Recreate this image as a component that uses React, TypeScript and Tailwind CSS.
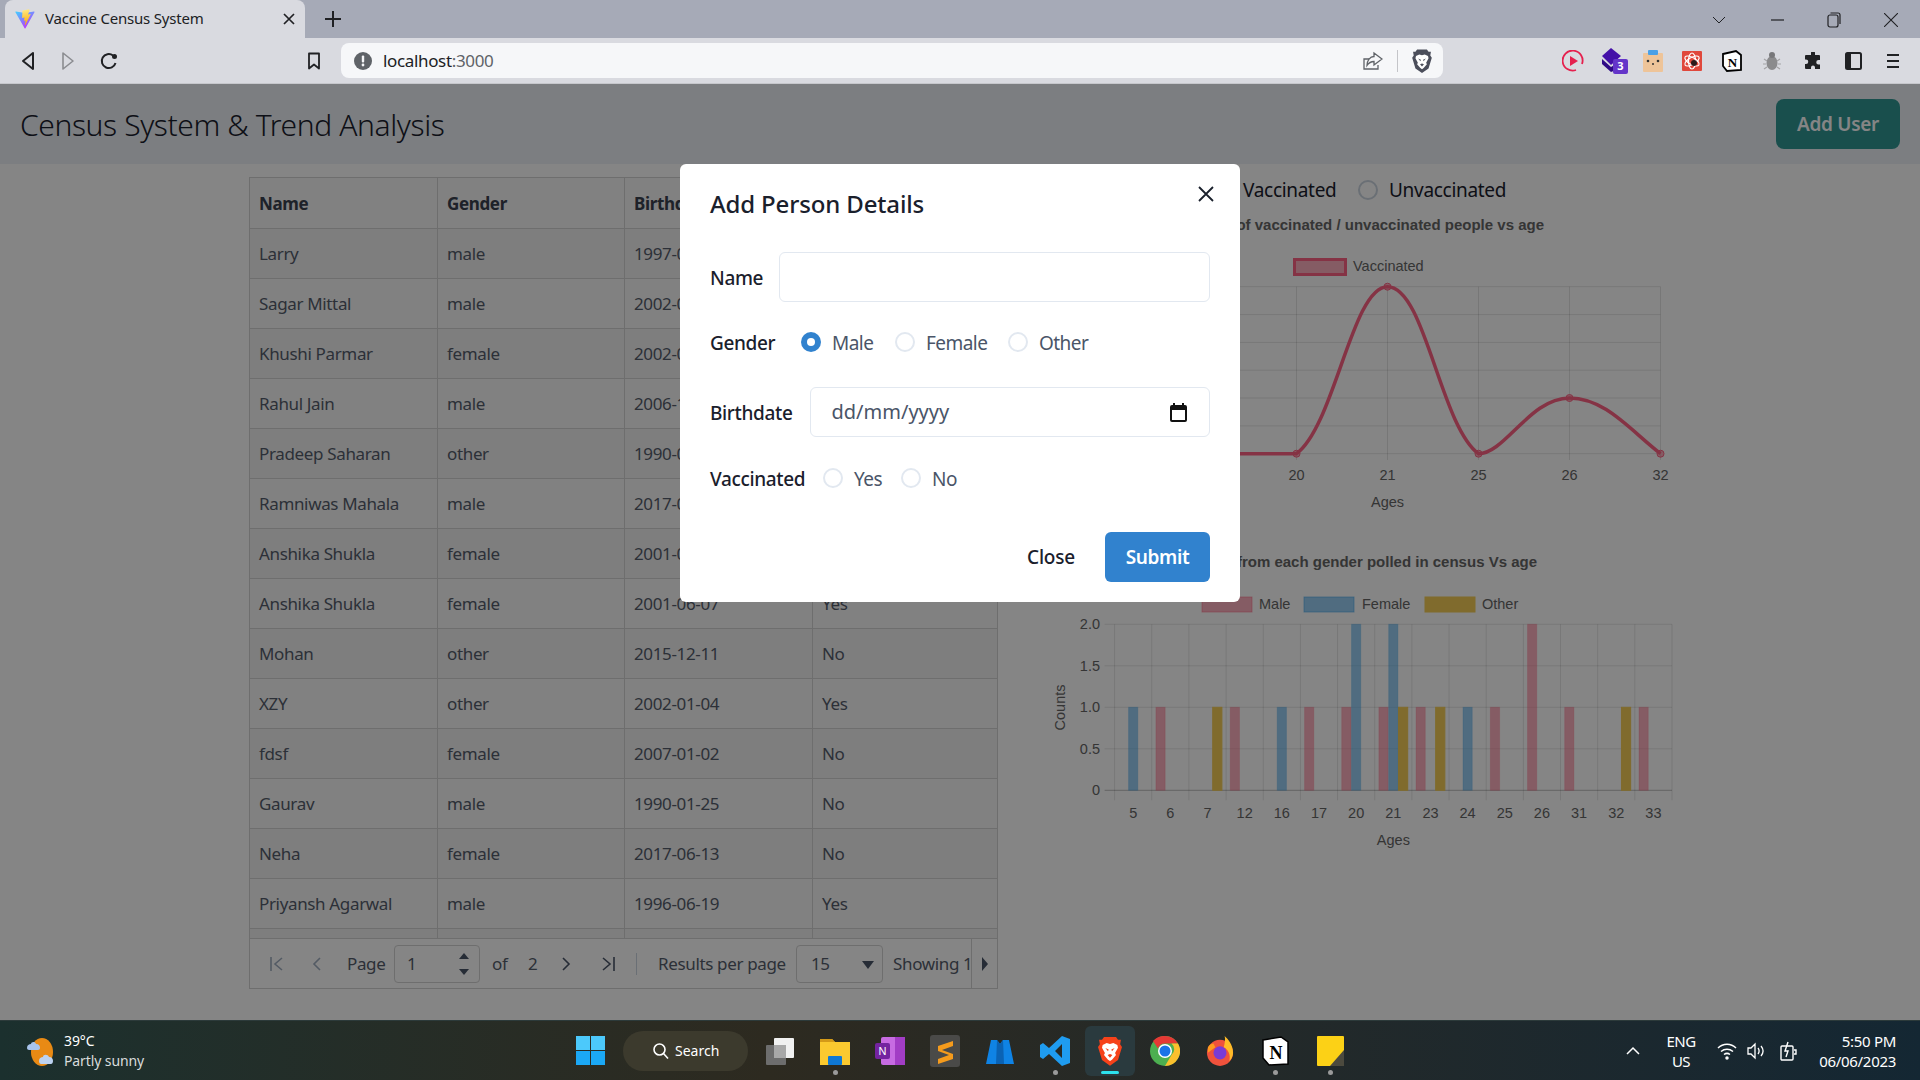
import React from "react";

const rows = [
  ["Larry", "male", "1997-04-12", "Yes"],
  ["Sagar Mittal", "male", "2002-03-18", "Yes"],
  ["Khushi Parmar", "female", "2002-08-21", "Yes"],
  ["Rahul Jain", "male", "2006-11-02", "No"],
  ["Pradeep Saharan", "other", "1990-05-30", "No"],
  ["Ramniwas Mahala", "male", "2017-02-14", "No"],
  ["Anshika Shukla", "female", "2001-06-07", "Yes"],
  ["Anshika Shukla", "female", "2001-06-07", "Yes"],
  ["Mohan", "other", "2015-12-11", "No"],
  ["XZY", "other", "2002-01-04", "Yes"],
  ["fdsf", "female", "2007-01-02", "No"],
  ["Gaurav", "male", "1990-01-25", "No"],
  ["Neha", "female", "2017-06-13", "No"],
  ["Priyansh Agarwal", "male", "1996-06-19", "Yes"],
];

const ages = ["5", "6", "7", "12", "16", "17", "20", "21", "23", "24", "25", "26", "31", "32", "33"];
const bars: Record<string, [number, number, number]> = {
  "5": [0, 1, 0], "6": [1, 0, 0], "7": [0, 0, 1], "12": [1, 0, 0], "16": [0, 1, 0], "17": [1, 0, 0],
  "20": [1, 2, 0], "21": [1, 2, 1], "23": [1, 0, 1], "24": [0, 1, 0], "25": [1, 0, 0], "26": [2, 0, 0],
  "31": [1, 0, 0], "32": [0, 0, 1], "33": [1, 0, 0],
};

function Radio({ checked = false, dim = false }: { checked?: boolean; dim?: boolean }) {
  return checked ? (
    <span className="flex h-5 w-5 shrink-0 items-center justify-center rounded-full bg-[#3182ce]">
      <span className="h-2 w-2 rounded-full bg-white" />
    </span>
  ) : (
    <span className={`h-5 w-5 shrink-0 rounded-full border-2 ${dim ? "border-[#cbd5e0]" : "border-[#e2e8f0]"}`} />
  );
}

function RadioLabel({ label, checked, w }: { label: string; checked?: boolean; w: string }) {
  return (
    <span className={`flex items-center gap-[11px] ${w}`}>
      <Radio checked={checked} />
      <span className="pt-[1px] text-[19px] leading-5 tracking-[-0.55px] text-[#4a5568]">{label}</span>
    </span>
  );
}

function Chart1() {
  const xs = [1114.5, 1205.5, 1296.5, 1387.5, 1478.5, 1569.5, 1660.5];
  const ys = [286.7, 314.6, 342.4, 370.2, 398, 425.9, 453.7];
  return (
    <svg width="680" height="310" viewBox="1040 210 680 310" className="block" fontFamily="'Liberation Sans', Arial, sans-serif">
      <text x="1544" y="230" textAnchor="end" fontSize="15" fontWeight="700" fill="#666666">Number of vaccinated / unvaccinated people vs age</text>
      <rect x="1294.5" y="259.5" width="51" height="15" fill="#ff638280" stroke="#ff6384" strokeWidth="3" />
      <text x="1353" y="270.500" fontSize="14.500" fill="#666666">Vaccinated</text>
      {xs.map((x) => <line key={x} x1={x} x2={x} y1="286.7" y2="460" stroke="#0000001a" />)}
      {ys.map((y) => <line key={y} x1="1100" x2="1660.5" y1={y} y2={y} stroke="#0000001a" />)}
      <path d="M1100 453.7 L1296.5 453.7 C1335 425 1352 286.7 1387.500 286.7 C1425 286.7 1440 425 1478.5 453.7 C1505 453.7 1530 398 1569.5 398 C1605 398 1630 430 1660.5 453.7" fill="none" stroke="#ff6384" strokeWidth="3.500" />
      {[[1296.5, 453.7], [1387.5, 286.7], [1478.5, 453.7], [1569.5, 398], [1660.5, 453.7]].map(([x, y]) => (
        <circle key={x} cx={x} cy={y} r="3.500" fill="#ff638280" stroke="#ff6384" />
      ))}
      {[["20", 1296.5], ["21", 1387.5], ["25", 1478.5], ["26", 1569.5], ["32", 1660.5]].map(([t, x]) => (
        <text key={t} x={x} y="480" textAnchor="middle" fontSize="14.500" fill="#666666">{t}</text>
      ))}
      <text x="1387.5" y="507" textAnchor="middle" fontSize="14.500" fill="#666666">Ages</text>
    </svg>
  );
}

function Chart2() {
  const left = 1114.6, right = 1672, top = 624.3, bottom = 790.3;
  const step = (right - left) / 15;
  const colors = ["#ff638280", "#36a2eb80", "#f5ce56"];
  const solid = ["#ff638240", "#36a2eb40", "#f5ce56"];
  return (
    <svg width="680" height="310" viewBox="1040 540 680 310" className="block" fontFamily="'Liberation Sans', Arial, sans-serif">
      <text x="1537" y="567" textAnchor="end" fontSize="15" fontWeight="700" fill="#666666">Number of people from each gender polled in census Vs age</text>
      {[["Male", 1202, 1259, "#ff638280", "#ff638280"], ["Female", 1304, 1362, "#36a2eb80", "#36a2eb80"], ["Other", 1425, 1482, "#f5ce56", "#f5ce56"]].map(([t, bx, tx, c, s]) => (
        <g key={t as string}>
          <rect x={bx as number} y="597" width="50" height="15" fill={c as string} stroke={s as string} />
          <text x={tx as number} y="609" fontSize="14.500" fill="#666666">{t}</text>
        </g>
      ))}
      {Array.from({ length: 16 }).map((_, i) => (
        <line key={i} x1={left + i * step} x2={left + i * step} y1={top} y2={bottom + 10} stroke="#0000001a" />
      ))}
      {[0, 1, 2, 3, 4].map((i) => (
        <g key={i}>
          <line x1={left - 10} x2={right} y1={top + (i * (bottom - top)) / 4} y2={top + (i * (bottom - top)) / 4} stroke={i === 4 ? "#00000040" : "#0000001a"} />
          <text x="1100" y={top + (i * (bottom - top)) / 4 + 5} textAnchor="end" fontSize="14.500" fill="#666666">{["2.0", "1.5", "1.0", "0.5", "0"][i]}</text>
        </g>
      ))}
      {ages.map((a, i) => {
        const cx = left + step * (i + 0.5);
        return (
          <g key={a}>
            {bars[a].map((v, k) =>
              v > 0 ? (
                <rect key={k} x={cx + (k - 1) * 9.8 - 4.6} y={bottom - (v * (bottom - top)) / 2} width="9.2" height={(v * (bottom - top)) / 2} fill={colors[k]} stroke={solid[k]} strokeWidth="1" />
              ) : null
            )}
            <text x={cx} y="818" textAnchor="middle" fontSize="14.500" fill="#666666">{a}</text>
          </g>
        );
      })}
      <text x="1393.4" y="845" textAnchor="middle" fontSize="14.500" fill="#666666">Ages</text>
      <text transform="translate(1065 707.5) rotate(-90)" textAnchor="middle" fontSize="14.500" fill="#666666">Counts</text>
    </svg>
  );
}

function ViteIcon() {
  return (
    <svg width="20" height="20" viewBox="0 0 410 404">
      <defs>
        <linearGradient id="va" x1="0" y1="0" x2="0.6" y2="1">
          <stop offset="0" stopColor="#41d1ff" />
          <stop offset="1" stopColor="#bd34fe" />
        </linearGradient>
        <linearGradient id="vb" x1="0.4" y1="0" x2="0.5" y2="1">
          <stop offset="0" stopColor="#ffea83" />
          <stop offset="1" stopColor="#ffa800" />
        </linearGradient>
      </defs>
      <path d="M399 63 215 392c-4 7-14 7-18 0L9 63c-4-7 2-16 11-15l184 33c1 0 2 0 3 0l180-33c9-1 16 8 12 15z" fill="url(#va)" />
      <path d="M293 2 157 29c-2 0-4 2-4 5l-8 142c0 3 3 6 6 5l38-9c4-1 7 2 6 6l-11 55c-1 4 3 7 6 6l23-7c4-1 7 2 6 6l-18 86c-1 5 6 8 9 3l2-3 108-215c2-4-1-8-5-7l-38 7c-4 1-7-3-6-6l25-86c1-4-3-8-6-7z" fill="url(#vb)" />
    </svg>
  );
}

function BraveLion({ fill, w = 18, h = 22 }: { fill: string; w?: number; h?: number }) {
  return (
    <svg width={w} height={h} viewBox="0 0 18 22">
      <path d="M4.500 0.500h9L15 2.500 17.200 2.600 16.600 6 18 8 15 17.800 9 22 3 17.800 0 8 1.400 6 .8 2.600 3 2.500z" fill={fill} />
      <path d="M3.500 6.500 6.500 5 9 5.800 11.500 5 14.500 6.500 15 8.500 12.800 12.500 13.500 14 10.500 17.500 9 18.500 7.500 17.500 4.500 14 5.200 12.500 3 8.500z" fill="#ffffff" />
      <path d="M5.500 8.800 8 9.800 7.500 11.200zM12.500 8.800 10 9.800 10.500 11.200zM7.200 14 9 13.200 10.800 14 9 16z" fill={fill} />
    </svg>
  );
}

function TaskIcon({ children, ml, dot }: { children: React.ReactNode; ml: string; dot?: boolean }) {
  return (
    <div className={`relative flex h-[50px] w-[35px] shrink-0 items-center justify-center ${ml}`}>
      {children}
      {dot && <span className="absolute bottom-[1px] left-[15px] h-[5px] w-[5px] rounded-full bg-[#9a9a9a]" />}
    </div>
  );
}

function Taskbar() {
  return (
    <div className="flex h-[60px] shrink-0 items-center border-t border-[#2c3a3a] bg-gradient-to-r from-[#1b302e] via-[#2d2a20] via-40% to-[#142733] text-white">
      <div className="flex w-[540px] shrink-0 items-center pl-[24px]">
        <svg width="34" height="32" viewBox="0 0 34 32">
          <ellipse cx="18" cy="17" rx="11" ry="14" fill="#e98a14" />
          <path d="M3 13c0-3 2-4 4-4 0-2 4-3 5 0 3 0 4 2 4 4 0 1-1 2-2 2H5c-1 0-2-1-2-2z" fill="#a9c4ec" />
          <path d="M15 26c0-3 2-4 4-4 0-3 5-3 6 0 3 0 4 2 4 4s-1 3-2 3H17c-1 0-2-1-2-3z" fill="#bcd2f0" />
        </svg>
        <div className="ml-[6px] text-[14px] leading-5 tracking-[-0.1px]">
          <div>39°C</div>
          <div className="text-[#d8dcdc]">Partly sunny</div>
        </div>
      </div>
      <div className="flex items-center pl-[36px]">
        <span className="grid h-[29px] w-[29px] shrink-0 grid-cols-2 gap-[1px]">
          <span className="bg-[#4cc9fb]" /><span className="bg-[#4cc9fb]" /><span className="bg-[#1ba8f5]" /><span className="bg-[#1ba8f5]" />
        </span>
        <div className="ml-[18px] flex h-10 w-[125px] shrink-0 items-center rounded-full bg-[#3c3a2d] pl-[29px] text-[14px]">
          <svg width="18" height="18" viewBox="0 0 18 18" fill="none" stroke="#ffffff" strokeWidth="1.600"><circle cx="7.500" cy="7.500" r="5.500" /><path d="M11.500 11.500 16 16.500" /></svg>
          <span className="ml-[5px]">Search</span>
        </div>
        <TaskIcon ml="ml-[14.5px]">
          <svg width="32" height="32" viewBox="0 0 32 32"><rect x="10" y="3" width="20" height="20" rx="1" fill="#f1f1f1" /><rect x="2" y="10" width="20" height="20" rx="1" fill="#6d6d6d" /><rect x="10" y="10" width="12" height="13" fill="#a8a8a8" /></svg>
        </TaskIcon>
        <TaskIcon ml="ml-[20px]" dot>
          <svg width="30" height="28" viewBox="0 0 30 28"><path d="M0 2h12l3 3h15v23H0z" fill="#fbc92f" /><path d="M0 2h12l3 3H0z" fill="#d49a18" /><rect x="8" y="19" width="14" height="9" rx="1" fill="#0f78d4" /></svg>
        </TaskIcon>
        <TaskIcon ml="ml-[20px]">
          <svg width="30" height="30" viewBox="0 0 30 30"><rect x="6" y="1" width="24" height="28" rx="2" fill="#c76be2" /><rect x="20" y="1" width="10" height="28" fill="#a23dc5" /><rect x="0" y="7" width="15" height="16" rx="2" fill="#7423a0" /><text x="7.500" y="19" textAnchor="middle" fontSize="11" fill="#ffffff" fontFamily="'Liberation Sans', sans-serif">N</text></svg>
        </TaskIcon>
        <TaskIcon ml="ml-[20px]">
          <svg width="30" height="32" viewBox="0 0 30 32"><rect width="30" height="32" rx="3" fill="#4a4a48" /><path d="M8 11 23 6v5L12 15l11 4v5L8 29v-5l11-4L8 16z" fill="#f59b1c" /></svg>
        </TaskIcon>
        <TaskIcon ml="ml-[20px]">
          <svg width="28" height="26" viewBox="0 0 28 26"><path d="M5 2h6l3 4 3-4h6l5 24H0z" fill="#0f83e5" /><path d="M11 2l3 4 3-4 1 24H10z" fill="#0a62b4" /></svg>
        </TaskIcon>
        <TaskIcon ml="ml-[20px]" dot>
          <svg width="30" height="30" viewBox="0 0 30 30"><path d="M22 0 30 3v24l-8 3L9 18l-6 5-3-2V9l3-2 6 5zm0 8-7 7 7 7z" fill="#1f9cf0" /></svg>
        </TaskIcon>
        <div className="relative ml-[12.5px] flex h-[50px] w-[50px] shrink-0 items-center justify-center rounded-md bg-[#2a3a3e]">
          <BraveLion fill="#f6421a" w={24} h={30} />
          <span className="absolute bottom-[2px] left-[16px] h-[3px] w-[18px] rounded-sm bg-[#2de2ee]" />
        </div>
        <TaskIcon ml="ml-[12.5px]">
          <svg width="30" height="30" viewBox="0 0 30 30"><circle cx="15" cy="15" r="15" fill="#4caf50" /><path d="M15 0a15 15 0 0 1 13 7.500H15a7.500 7.500 0 0 0-7 5L3 5a15 15 0 0 1 12-5z" fill="#e53935" /><path d="M28 7.500A15 15 0 0 1 15 30l6.500-11a7.500 7.500 0 0 0 0-11.500z" fill="#fbc02d" /><circle cx="15" cy="15" r="7" fill="#ffffff" /><circle cx="15" cy="15" r="5.500" fill="#1a73e8" /></svg>
        </TaskIcon>
        <TaskIcon ml="ml-[20px]">
          <svg width="28" height="32" viewBox="0 0 30 32"><circle cx="15" cy="18" r="14" fill="#f0523c" /><path d="M20 0c3 3 9 9 9 18a13 13 0 0 1-4 9c2-8-2-13-6-15 1-4 2-8 1-12z" fill="#ffbb28" /><circle cx="15" cy="18" r="7" fill="#7a3bd6" /><path d="M2 12c2-3 4-4 6-4l2 4-8 6z" fill="#ff9a1f" /></svg>
        </TaskIcon>
        <TaskIcon ml="ml-[20px]" dot>
          <svg width="27" height="30" viewBox="0 0 27 30"><path d="M1 4 19 1l7 5v22L7 29 1 22z" fill="#ffffff" stroke="#000000" strokeWidth="1.500" /><text x="14" y="23" textAnchor="middle" fontSize="18" fontWeight="700" fill="#000000" fontFamily="'Liberation Serif', serif">N</text></svg>
        </TaskIcon>
        <TaskIcon ml="ml-[20px]" dot>
          <svg width="27" height="30" viewBox="0 0 27 30"><rect width="27" height="30" rx="1" fill="#fcd116" /><path d="M27 14v16H13z" fill="#4c4a3e" /></svg>
        </TaskIcon>
      </div>
      <div className="ml-auto flex items-center pr-[24px] text-[15px] leading-5">
        <svg width="14" height="10" viewBox="0 0 14 10" fill="none" stroke="#ffffff" strokeWidth="1.500"><path d="M1 8 7 2l6 6" /></svg>
        <div className="ml-[25px] w-[32px] text-center tracking-[-0.5px]">ENG<br />US</div>
        <svg className="ml-[20px]" width="20" height="18" viewBox="0 0 20 18" fill="none" stroke="#ffffff" strokeWidth="1.500"><path d="M1 6c5-5 13-5 18 0M4 9.500c3.500-3 8.500-3 12 0M7 12.500c2-1.500 4-1.500 6 0" /><circle cx="10" cy="16" r="1" fill="#ffffff" /></svg>
        <svg className="ml-[9px]" width="20" height="18" viewBox="0 0 20 18" fill="none" stroke="#ffffff" strokeWidth="1.300"><path d="M2 6h3l4-4v14l-4-4H2zM12 6c1.500 2 1.500 4 0 6M15 4c2.500 3 2.500 7 0 10" /></svg>
        <svg className="ml-[12px]" width="20" height="20" viewBox="0 0 20 20" fill="none" stroke="#ffffff" strokeWidth="1.400"><rect x="3" y="5" width="12" height="14" rx="1" /><path d="M16 9h2v4h-2" /><path d="M10 1 7 10h3l-2 6" stroke="#ffffff" /></svg>
        <div className="ml-[20px] w-[78px] whitespace-nowrap text-right tracking-[-0.3px]">5:50 PM<br />06/06/2023</div>
      </div>
    </div>
  );
}

function Toolbar() {
  return (
    <div className="flex h-[46px] shrink-0 items-center border-b border-[#c6c7cc] bg-[#d9dae0]">
      <svg className="ml-[20px]" width="16" height="20" viewBox="0 0 16 20" fill="none" stroke="#202124" strokeWidth="2" strokeLinejoin="round"><path d="M13 2 3 10l10 8z" /></svg>
      <svg className="ml-[24px]" width="16" height="20" viewBox="0 0 16 20" fill="none" stroke="#8b8c90" strokeWidth="1.600" strokeLinejoin="round"><path d="M3 2l10 8-10 8z" /></svg>
      <svg className="ml-[24px]" width="18" height="18" viewBox="0 0 18 18" fill="none" stroke="#202124" strokeWidth="2"><path d="M15.500 11A7 7 0 1 1 13 3.500" /><circle cx="14.500" cy="4.500" r="2.500" fill="#202124" stroke="none" /></svg>
      <svg className="ml-[189px]" width="14" height="18" viewBox="0 0 14 18" fill="none" stroke="#202124" strokeWidth="1.800" strokeLinejoin="round"><path d="M2 1.500h10v15l-5-4-5 4z" /></svg>
      <div className="ml-[20px] flex h-[35px] w-[1102px] items-center rounded-lg bg-[#f6f7f9] pl-[13px]">
        <svg width="18" height="18" viewBox="0 0 18 18"><circle cx="9" cy="9" r="9" fill="#5f6368" /><rect x="7.800" y="3.500" width="2.400" height="7" rx="1" fill="#f6f7f9" /><circle cx="9" cy="13" r="1.400" fill="#f6f7f9" /></svg>
        <span className="ml-[11px] text-[17px] tracking-[-0.35px]"><span className="text-[#202124]">localhost</span><span className="text-[#5f6368]">:3000</span></span>
        <svg className="ml-auto" width="20" height="20" viewBox="0 0 20 20" fill="none" stroke="#5f6368" strokeWidth="1.300"><path d="M6 18h-5V8h5M3 18h12v-4" /><path d="M11 2l8 6-8 6v-3.500c-3 0-5 1-7 4 0-5 3-9 7-9z" /></svg>
        <span className="ml-[14px] h-[22px] w-px bg-[#c4c5c9]" />
        <span className="ml-[14px] mr-[11px] flex"><BraveLion fill="#4b4e5b" w={20} h={24} /></span>
      </div>
      <div className="ml-[110px] flex items-center">
        <span className="flex w-[40px] justify-center">
          <svg width="22" height="22" viewBox="0 0 22 22" fill="none"><path d="M14 20A10 10 0 1 1 20 14" stroke="#e5204e" strokeWidth="1.800" /><path d="M8 6l8 5-8 5z" fill="#e5204e" /></svg>
        </span>
        <span className="relative flex w-[40px] justify-center">
          <svg width="24" height="26" viewBox="0 0 24 26"><path d="M10 0l10 8-10 9L1 8z" fill="#4410a8" /><path d="M1 11l9 8 5-3v6L10 24 1 16z" fill="#2f0a85" /></svg>
          <span className="absolute left-[20px] top-[11px] flex h-[15px] w-[15px] items-center justify-center rounded-[2px] bg-[#6435c9] text-[11px] font-bold text-white">3</span>
        </span>
        <span className="flex w-[39px] justify-center">
          <svg width="20" height="22" viewBox="0 0 20 22"><rect y="3" width="20" height="19" rx="1" fill="#eec499" /><rect x="5" width="10" height="5" rx="1" fill="#4aa0e6" /><circle cx="5" cy="11" r="1.300" fill="#333333" /><circle cx="15" cy="11" r="1.300" fill="#333333" /><circle cx="10" cy="14" r="1" fill="#333333" /></svg>
        </span>
        <span className="flex w-[40px] justify-center">
          <svg width="20" height="20" viewBox="0 0 20 20"><rect width="20" height="20" rx="1" fill="#e0483c" /><g fill="none" stroke="#ffffff" strokeWidth="1.200"><ellipse cx="10" cy="10" rx="8" ry="3.500" transform="rotate(30 10 10)" /><ellipse cx="10" cy="10" rx="8" ry="3.500" transform="rotate(-30 10 10)" /><ellipse cx="10" cy="10" rx="8" ry="3.500" transform="rotate(90 10 10)" /></g><circle cx="12" cy="12" r="3" fill="#2a1a1a" /></svg>
        </span>
        <span className="flex w-[40px] justify-center">
          <svg width="20" height="22" viewBox="0 0 20 22"><path d="M1 4 14 1l5 4v15L5 21 1 16z" fill="#ffffff" stroke="#000000" strokeWidth="1.800" /><text x="10.500" y="17" textAnchor="middle" fontSize="13" fontWeight="700" fill="#000000" fontFamily="'Liberation Serif', serif">N</text></svg>
        </span>
        <span className="flex w-[40px] justify-center">
          <svg width="18" height="20" viewBox="0 0 18 20"><ellipse cx="9" cy="12" rx="5.500" ry="7" fill="#8b8b8d" /><circle cx="9" cy="4" r="3" fill="#77777a" /><path d="M1 8l3 2M17 8l-3 2M0 13h3M18 13h-3M1 18l3-2M17 18l-3-2" stroke="#a3a3a5" strokeWidth="1.200" /></svg>
        </span>
        <span className="flex w-[41px] justify-center">
          <svg width="18" height="18" viewBox="0 0 18 18"><path d="M7 1a2 2 0 0 1 4 0v2h4a1 1 0 0 1 1 1v4h-1.500a2 2 0 0 0 0 4.500H16V17H11v-1.500a2 2 0 0 0-4 0V17H2a1 1 0 0 1-1-1v-4h1a2 2 0 0 0 0-4.500H1V4a1 1 0 0 1 1-1h5z" fill="#202124" /></svg>
        </span>
        <span className="flex w-[40px] justify-center">
          <svg width="17" height="18" viewBox="0 0 17 18" fill="none"><rect x="1" y="1" width="15" height="16" rx="1.500" stroke="#202124" strokeWidth="2" /><rect x="1" y="1" width="5" height="16" fill="#202124" /></svg>
        </span>
        <span className="flex w-[40px] justify-center">
          <svg width="12" height="16" viewBox="0 0 12 16" stroke="#202124" strokeWidth="2"><path d="M0 2h12M0 8h12M0 14h12" /></svg>
        </span>
      </div>
    </div>
  );
}

function Pagination() {
  return (
    <div className="flex h-[50px] items-center border-x border-b border-[#d4d4d4] text-[17px] tracking-[-0.35px] text-[#555d6b]">
      <svg className="ml-[19px] shrink-0" width="16" height="14" viewBox="0 0 16 14" fill="none" stroke="#a0aec0" strokeWidth="1.600"><path d="M2 0v14M13 1 6 7l7 6" /></svg>
      <svg className="ml-[27px] shrink-0" width="10" height="14" viewBox="0 0 10 14" fill="none" stroke="#a0aec0" strokeWidth="1.600"><path d="M8 1 2 7l6 6" /></svg>
      <span className="ml-[25px] w-[36px] shrink-0">Page</span>
      <div className="relative ml-[11px] flex h-[38px] w-[86px] shrink-0 items-center rounded-sm border border-[#d4d4d4] pl-[12px]">
        1
        <svg className="absolute right-[9px] top-[6px]" width="12" height="8" viewBox="0 0 12 8" fill="#4a5568"><path d="M6 1l5 6H1z" /></svg>
        <svg className="absolute bottom-[6px] right-[9px]" width="12" height="8" viewBox="0 0 12 8" fill="#4a5568"><path d="M6 7 1 1h10z" /></svg>
      </div>
      <span className="ml-[12px] w-[15px] shrink-0">of</span>
      <span className="ml-[21px] w-[10px] shrink-0">2</span>
      <svg className="ml-[23px] shrink-0" width="10" height="14" viewBox="0 0 10 14" fill="none" stroke="#4a5568" strokeWidth="1.600"><path d="M2 1l6 6-6 6" /></svg>
      <svg className="ml-[29px] shrink-0" width="16" height="14" viewBox="0 0 16 14" fill="none" stroke="#4a5568" strokeWidth="1.600"><path d="M3 1l7 6-7 6M14 0v14" /></svg>
      <span className="ml-[20px] h-[22px] w-px shrink-0 bg-[#cbd5e0]" />
      <span className="ml-[21px] w-[127px] shrink-0 whitespace-nowrap">Results per page</span>
      <div className="relative ml-[11px] flex h-[38px] w-[87px] shrink-0 items-center rounded-sm border border-[#d4d4d4] pl-[14px]">
        15
        <svg className="absolute right-[8px] top-[15px]" width="12" height="8" viewBox="0 0 12 8" fill="#4a5568"><path d="M0 0h12L6 8z" /></svg>
      </div>
      <div className="ml-[10px] w-[78px] shrink-0 overflow-hidden whitespace-nowrap">Showing 1 to 15</div>
      <div className="flex h-full w-[26px] shrink-0 items-center justify-center border-l border-[#d4d4d4]">
        <svg width="8" height="14" viewBox="0 0 8 14" fill="#4a5568"><path d="M1 0l6 7-6 7z" /></svg>
      </div>
    </div>
  );
}

function Table() {
  return (
    <div className="w-[749px] shrink-0 text-[17px] tracking-[-0.35px] text-[#555d6b]">
      <div className="grid grid-cols-[188px_187px_188px_184px] border border-[#d4d4d4] bg-[#f7f7f7]">
        {["Name", "Gender", "Birthdate", "Vaccinated"].map((h) => (
          <div key={h} className="flex h-[50px] items-center border-r border-[#d4d4d4] pl-[9px] pt-[1px] font-bold text-[#3a4150] last:border-r-0">{h}</div>
        ))}
      </div>
      {rows.map((r, i) => (
        <div key={i} className={`grid h-[50px] grid-cols-[188px_187px_188px_184px] border-x border-b border-[#d4d4d4] ${i % 2 === 0 ? "bg-[#f1f1f1]" : "bg-[#f7f7f7]"}`}>
          {r.map((c, j) => (
            <div key={j} className="flex items-center border-r border-[#d4d4d4] pl-[9px] last:border-r-0">{c}</div>
          ))}
        </div>
      ))}
      <div className="grid h-[10px] grid-cols-[188px_187px_188px_184px] border-x border-b border-[#d4d4d4] bg-[#f1f1f1]">
        {[0, 1, 2, 3].map((i) => <div key={i} className="border-r border-[#d4d4d4] last:border-r-0" />)}
      </div>
      <Pagination />
    </div>
  );
}

function Modal() {
  const label = "pt-[2px] text-[19px] font-medium leading-5 tracking-[-0.35px] text-[#1a202c]";
  return (
    <div className="absolute left-[680px] top-[80px] w-[560px] rounded-md bg-white px-[30px] pb-[20px] text-[#1a202c]">
      <div className="relative flex h-[88px] items-start pt-[21px]">
        <h2 className="text-[24px] font-medium leading-[38px] tracking-[-0.15px]">Add Person Details</h2>
        <svg className="absolute right-[-4px] top-[22px]" width="16" height="16" viewBox="0 0 16 16" stroke="#1a202c" strokeWidth="1.800"><path d="M1 1l14 14M15 1 1 15" /></svg>
      </div>
      <div className="flex h-[50px] items-center">
        <span className={`${label} w-[69px]`}>Name</span>
        <input aria-label="Name" className="h-[50px] flex-1 rounded-md border border-[#e2e8f0] outline-none" />
      </div>
      <div className="mt-[30px] flex h-5 items-center">
        <span className={`${label} w-[91px]`}>Gender</span>
        <RadioLabel label="Male" checked w="w-[94px]" />
        <RadioLabel label="Female" w="w-[113px]" />
        <RadioLabel label="Other" w="w-[100px]" />
      </div>
      <div className="mt-[35px] flex h-[50px] items-center">
        <span className={`${label} w-[99.5px]`}>Birthdate</span>
        <div className="flex h-[50px] flex-1 items-center justify-between rounded-md border border-[#e2e8f0] pl-[21px] pr-[22px] text-[20px] text-[#4a5568]">
          <span>dd/mm/yyyy</span>
          <svg width="17" height="19" viewBox="0 0 17 19" fill="none"><path d="M4 0v3M13 0v3" stroke="#111111" strokeWidth="2" /><rect x="1" y="3" width="15" height="15" rx="1" stroke="#111111" strokeWidth="2" /><rect x="1" y="3" width="15" height="4" fill="#111111" /></svg>
        </div>
      </div>
      <div className="mt-[31px] flex h-5 items-center">
        <span className={`${label} w-[113px]`}>Vaccinated</span>
        <RadioLabel label="Yes" w="w-[78px]" />
        <RadioLabel label="No" w="w-[70px]" />
      </div>
      <div className="mt-[44px] flex h-[50px] items-center justify-end">
        <span className="pt-[1px] text-[19px] font-medium tracking-[-0.2px] text-[#1a202c]">Close</span>
        <button className="ml-[30px] h-[50px] w-[105px] rounded-md bg-[#3182ce] pt-[1px] text-[19px] font-semibold tracking-[-0.4px] text-white">Submit</button>
      </div>
    </div>
  );
}

export default function App() {
  return (
    <div className="flex h-[1080px] w-[1920px] flex-col overflow-hidden bg-white [font-family:'Noto_Sans',sans-serif]">
      <div className="flex h-[38px] shrink-0 items-end bg-[#a6aab7]">
        <div className="ml-[5px] flex h-[38px] w-[300px] items-center rounded-t-lg bg-[#d9dae0] pb-[1px] pl-[10px] text-[15px] tracking-[-0.2px] text-[#202124]">
          <ViteIcon />
          <span className="ml-[10px]">Vaccine Census System</span>
          <svg className="ml-auto mr-[10px]" width="12" height="12" viewBox="0 0 12 12" stroke="#202124" strokeWidth="1.700"><path d="M1 1l10 10M11 1 1 11" /></svg>
        </div>
        <svg className="mb-[11px] ml-[20px]" width="16" height="16" viewBox="0 0 16 16" stroke="#202124" strokeWidth="2"><path d="M8 0v16M0 8h16" /></svg>
        <div className="mb-[10px] ml-auto flex items-center pr-[22px]">
          <svg width="14" height="8" viewBox="0 0 14 8" fill="none" stroke="#202124" strokeWidth="1"><path d="M1 1l6 6 6-6" /></svg>
          <svg className="ml-[45px]" width="13" height="2" viewBox="0 0 13 2" stroke="#202124" strokeWidth="1.200"><path d="M0 1h13" /></svg>
          <svg className="ml-[43px]" width="14" height="16" viewBox="0 0 14 16" fill="none" stroke="#202124" strokeWidth="1.200"><rect x="1" y="3" width="10" height="12" rx="2" /><path d="M3.500 1H11a2 2 0 0 1 2 2v9" /></svg>
          <svg className="ml-[43px]" width="14" height="14" viewBox="0 0 14 14" stroke="#202124" strokeWidth="1.100"><path d="M0 0l14 14M14 0 0 14" /></svg>
        </div>
      </div>
      <Toolbar />
      <div className="relative flex-1 overflow-hidden">
        <div className="flex h-[80px] items-center justify-between bg-[#edf2f7] px-[20px]">
          <h1 className="pt-[2px] text-[30px] font-light leading-[40px] tracking-[-0.4px] text-[#1a202c]">Census System &amp; Trend Analysis</h1>
          <button className="h-[50px] w-[124px] rounded-lg bg-[#319795] text-[19px] font-semibold tracking-[-0.3px] text-white">Add User</button>
        </div>
        <div className="flex pl-[249px] pt-[13px]">
          <Table />
          <div className="ml-[42px] w-[680px] pt-[3px]">
            <div className="flex h-5 items-center pl-[203px] text-[19px] tracking-[-0.3px] text-[#1a202c]">
              <span className="w-[115px]">Vaccinated</span>
              <Radio dim />
              <span className="ml-[11px]">Unvaccinated</span>
            </div>
            <div className="mt-[10px]"><Chart1 /></div>
            <div className="mt-[20px]"><Chart2 /></div>
          </div>
        </div>
        <div className="absolute inset-0 bg-[rgba(0,0,0,0.48)]" />
        <Modal />
      </div>
      <Taskbar />
    </div>
  );
}
